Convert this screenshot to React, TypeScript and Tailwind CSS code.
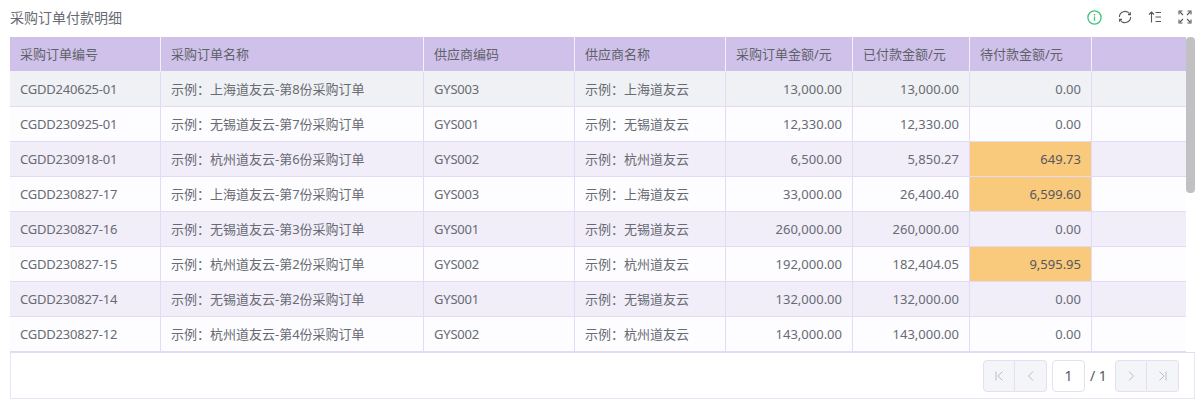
import React from "react";

const cols = ["w-[151px]", "w-[263px]", "w-[151px]", "w-[151px]", "w-[127px]", "w-[117px]", "w-[122px]", "flex-1"];
const heads = ["采购订单编号", "采购订单名称", "供应商编码", "供应商名称", "采购订单金额/元", "已付款金额/元", "待付款金额/元", ""];
const rows = [
  ["CGDD240625-01", "示例：上海道友云-第8份采购订单", "GYS003", "示例：上海道友云", "13,000.00", "13,000.00", "0.00"],
  ["CGDD230925-01", "示例：无锡道友云-第7份采购订单", "GYS001", "示例：无锡道友云", "12,330.00", "12,330.00", "0.00"],
  ["CGDD230918-01", "示例：杭州道友云-第6份采购订单", "GYS002", "示例：杭州道友云", "6,500.00", "5,850.27", "649.73"],
  ["CGDD230827-17", "示例：上海道友云-第7份采购订单", "GYS003", "示例：上海道友云", "33,000.00", "26,400.40", "6,599.60"],
  ["CGDD230827-16", "示例：无锡道友云-第3份采购订单", "GYS001", "示例：无锡道友云", "260,000.00", "260,000.00", "0.00"],
  ["CGDD230827-15", "示例：杭州道友云-第2份采购订单", "GYS002", "示例：杭州道友云", "192,000.00", "182,404.05", "9,595.95"],
  ["CGDD230827-14", "示例：无锡道友云-第2份采购订单", "GYS001", "示例：无锡道友云", "132,000.00", "132,000.00", "0.00"],
  ["CGDD230827-12", "示例：杭州道友云-第4份采购订单", "GYS002", "示例：杭州道友云", "143,000.00", "143,000.00", "0.00"],
];

function rowBg(i: number) {
  if (i === 0) return "bg-[#eff1f5]";
  return i % 2 === 0 ? "bg-[#f1eef9]" : "bg-[#fdfdff]";
}

const Ic = ({ children }: { children: React.ReactNode }) => (
  <svg width="14" height="14" viewBox="0 0 14 14" fill="none" stroke="#55585f" strokeWidth="1.1">
    {children}
  </svg>
);

function PageBtn({ d, cls }: { d: string; cls: string }) {
  return (
    <div className={`w-[32px] h-[32px] bg-[#f4f5f8] border border-[#e4e0f0] flex items-center justify-center ${cls}`}>
      <svg width="12" height="12" viewBox="0 0 12 12" fill="none" stroke="#b9bcc6" strokeWidth="1">
        <path d={d} />
      </svg>
    </div>
  );
}

export default function App() {
  return (
    <div className="w-[1200px] h-[407px] bg-white overflow-hidden text-[13px] text-[#686b73]" style={{ fontFamily: '"Noto Sans", "Noto Sans CJK SC", sans-serif' }}>
      <div className="h-[37px] flex items-center justify-between pl-[10px] pr-[8px] pb-[3px]">
        <span className="text-[#686b73] text-[14px]">采购订单付款明细</span>
        <div className="flex items-center gap-[16px]">
          <svg width="15" height="15" viewBox="0 0 15 15" fill="none" stroke="#3fc37a" strokeWidth="1.3">
            <circle cx="7.5" cy="7.5" r="6.6" />
            <path d="M7.5 6.6v4.2M7.5 4v1.4" />
          </svg>
          <Ic>
            <path d="M1.4 7A5.6 5.6 0 0 1 11.6 3.8M12.6 7A5.6 5.6 0 0 1 2.4 10.2" />
            <path d="M12.4 2.2V4.6H10M1.6 11.8V9.4h2.4" />
          </Ic>
          <Ic>
            <path d="M3.5 12.5V2M1 4.5L3.5 2L6 4.5M7.5 2.5H13M7.5 7H13M7.5 11.5H13" />
          </Ic>
          <Ic>
            <path d="M1 4.5V1h3.5M9.5 1H13v3.5M13 9.5V13H9.5M4.5 13H1V9.5M2 2L5 5M12 2L9 5M12 12L9 9M2 12L5 9" />
          </Ic>
        </div>
      </div>
      <div className="flex w-[1186px] pl-[10px]">
        <div className="w-[1176px]">
          <div className="flex h-[35px] bg-[#cfc1ea] border-b border-[#eff1f5]">
            {heads.map((h, i) => (
              <div key={i} className={`${cols[i]} ${i < 7 ? "border-r border-[#f3effb]" : ""} px-[10px] pt-[1px] flex items-center text-[#5f6269] whitespace-nowrap`}>
                {h}
              </div>
            ))}
          </div>
          {rows.map((r, i) => (
            <div key={i} className={`flex h-[35px] border-b border-[#e3daf5] ${rowBg(i)}`}>
              {r.map((c, j) => (
                <div
                  key={j}
                  className={`${cols[j]} border-r border-[#e3daf5] px-[10px] pt-[1px] flex items-center whitespace-nowrap ${j >= 4 ? "justify-end" : ""} ${j === 0 || j === 2 ? "tracking-[-0.22px]" : ""} ${j === 6 && i !== 0 && c !== "0.00" ? "bg-[#f9c97c] text-[#55585f]" : ""}`}
                >
                  {c}
                </div>
              ))}
              <div className="flex-1" />
            </div>
          ))}
        </div>
        <div className="relative w-0">
          <div className="absolute left-0 top-0 w-[9px] h-[156px] bg-[#c1c1c4] rounded-[4px]" />
        </div>
      </div>
      <div className="ml-[10px] w-[1185px] h-[47px] border border-t-[#e3daf5] border-[#e8e3f5] flex items-center justify-end pr-[15px]">
        <PageBtn cls="rounded-l-[4px]" d="M3 1.5v9M9.5 1.5L5 6l4.5 4.5" />
        <PageBtn cls="rounded-r-[4px] border-l-0" d="M8 1.5L3.5 6L8 10.5" />
        <div className="ml-[5px] w-[33px] h-[32px] border border-[#e4e0f0] rounded-[4px] flex items-center justify-center text-[14px] text-[#55585f]">1</div>
        <span className="ml-[5px] w-[25px] text-[14px] text-[#55585f]">/ 1</span>
        <PageBtn cls="rounded-l-[4px]" d="M4 1.5L8.5 6L4 10.5" />
        <PageBtn cls="rounded-r-[4px] border-l-0" d="M9 1.5v9M2.5 1.5L7 6l-4.5 4.5" />
      </div>
    </div>
  );
}
